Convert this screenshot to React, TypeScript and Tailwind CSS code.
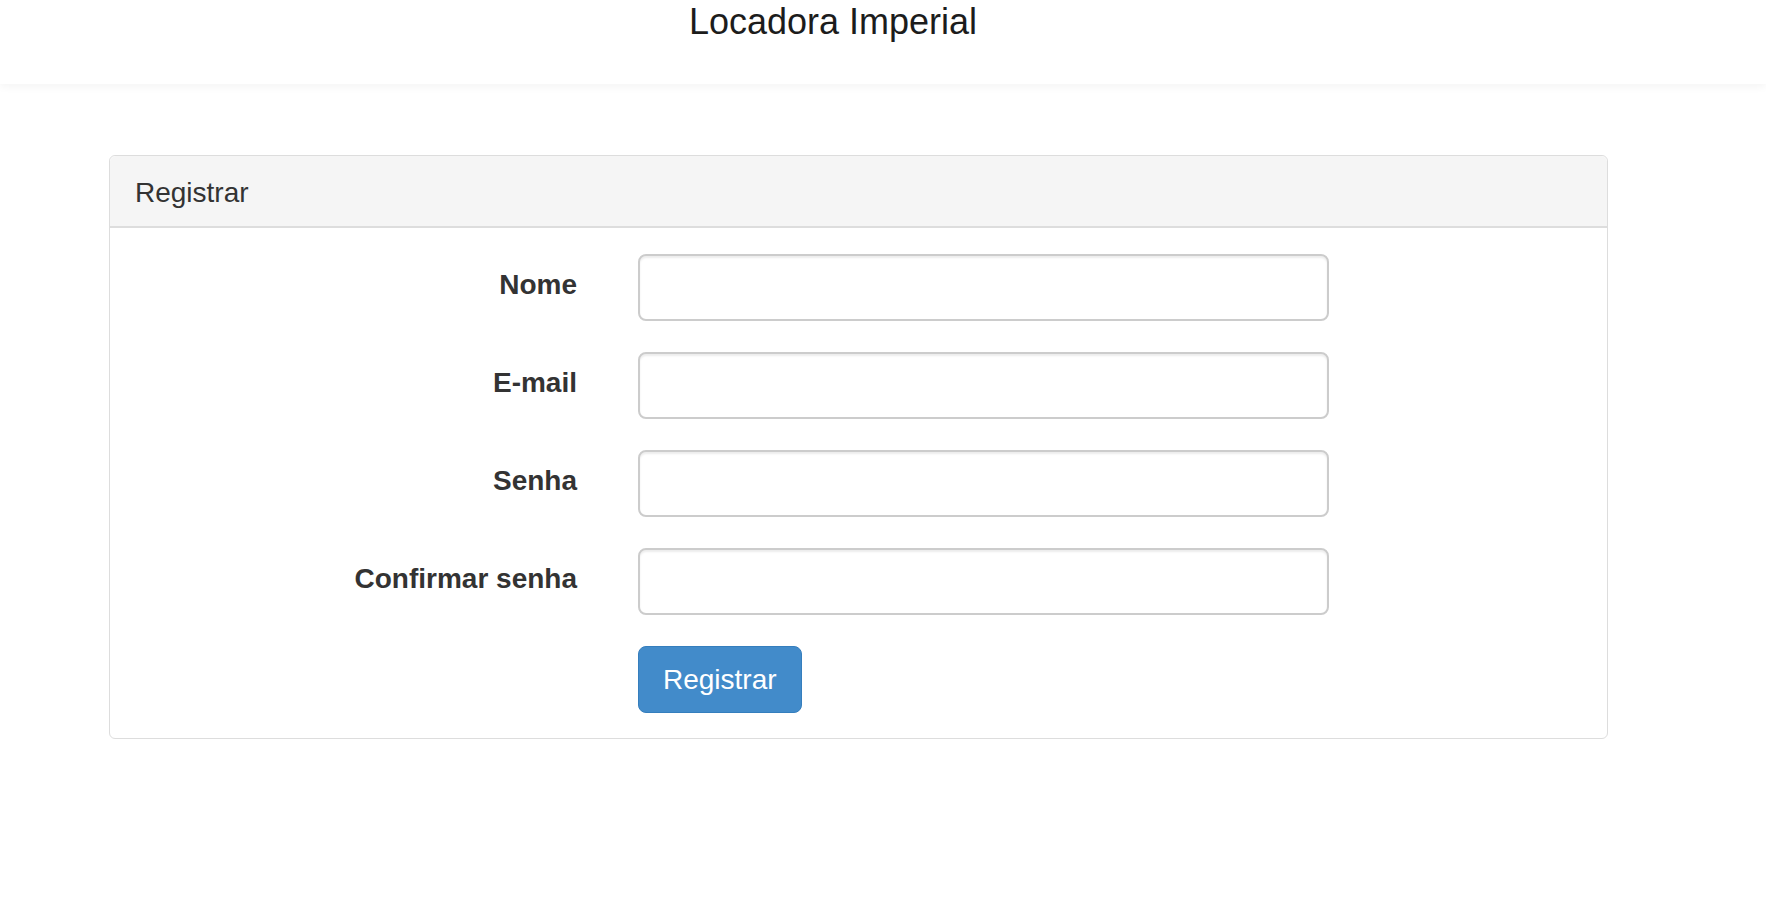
import React from "react";

const font = { fontFamily: '"Liberation Sans", Arial, Helvetica, sans-serif' };

function Row({ label, type = "text" }: { label: string; type?: string }) {
  return (
    <div className="flex items-start">
      <label className="w-[467px] shrink-0 text-right text-[28px] font-bold leading-[40px] text-[#333] pt-[11px]">
        {label}
      </label>
      <input
        type={type}
        className="ml-[61px] w-[691px] h-[67px] rounded-[8px] border-2 border-[#cccccc] bg-white shadow-[inset_0_2px_2px_rgba(0,0,0,0.075)] outline-none px-[24px] text-[28px]"
      />
    </div>
  );
}

export default function App() {
  return (
    <div className="min-h-[920px] bg-white" style={font}>
      <header className="h-[84px] bg-white shadow-[0_3px_8px_rgba(0,0,0,0.045)] relative z-10">
        <div className="w-[1666px] text-center pt-[2px]">
          <h1 className="text-[36px] leading-[40px] font-normal text-[#1c1c1c]">Locadora Imperial</h1>
        </div>
      </header>
      <main className="pt-[71px] pl-[109px]">
        <div className="w-[1499px] border border-[#dddddd] rounded-[6px] bg-white">
          <div className="h-[72px] bg-[#f5f5f5] border-b-2 border-[#dddddd] rounded-t-[6px] pl-[25px] flex items-center">
            <span className="text-[28px] leading-[32px] text-[#333] pt-[3px]">Registrar</span>
          </div>
          <div className="pt-[26px] pb-[25px] flex flex-col gap-[31px]">
            <Row label="Nome" />
            <Row label="E-mail" type="email" />
            <Row label="Senha" type="password" />
            <Row label="Confirmar senha" type="password" />
            <div className="flex">
              <div className="w-[467px] shrink-0" />
              <button className="ml-[61px] h-[67px] px-[24px] rounded-[8px] border border-[#357ebd] bg-[#428bca] text-white text-[28px] leading-[32px]">
                Registrar
              </button>
            </div>
          </div>
        </div>
      </main>
    </div>
  );
}
